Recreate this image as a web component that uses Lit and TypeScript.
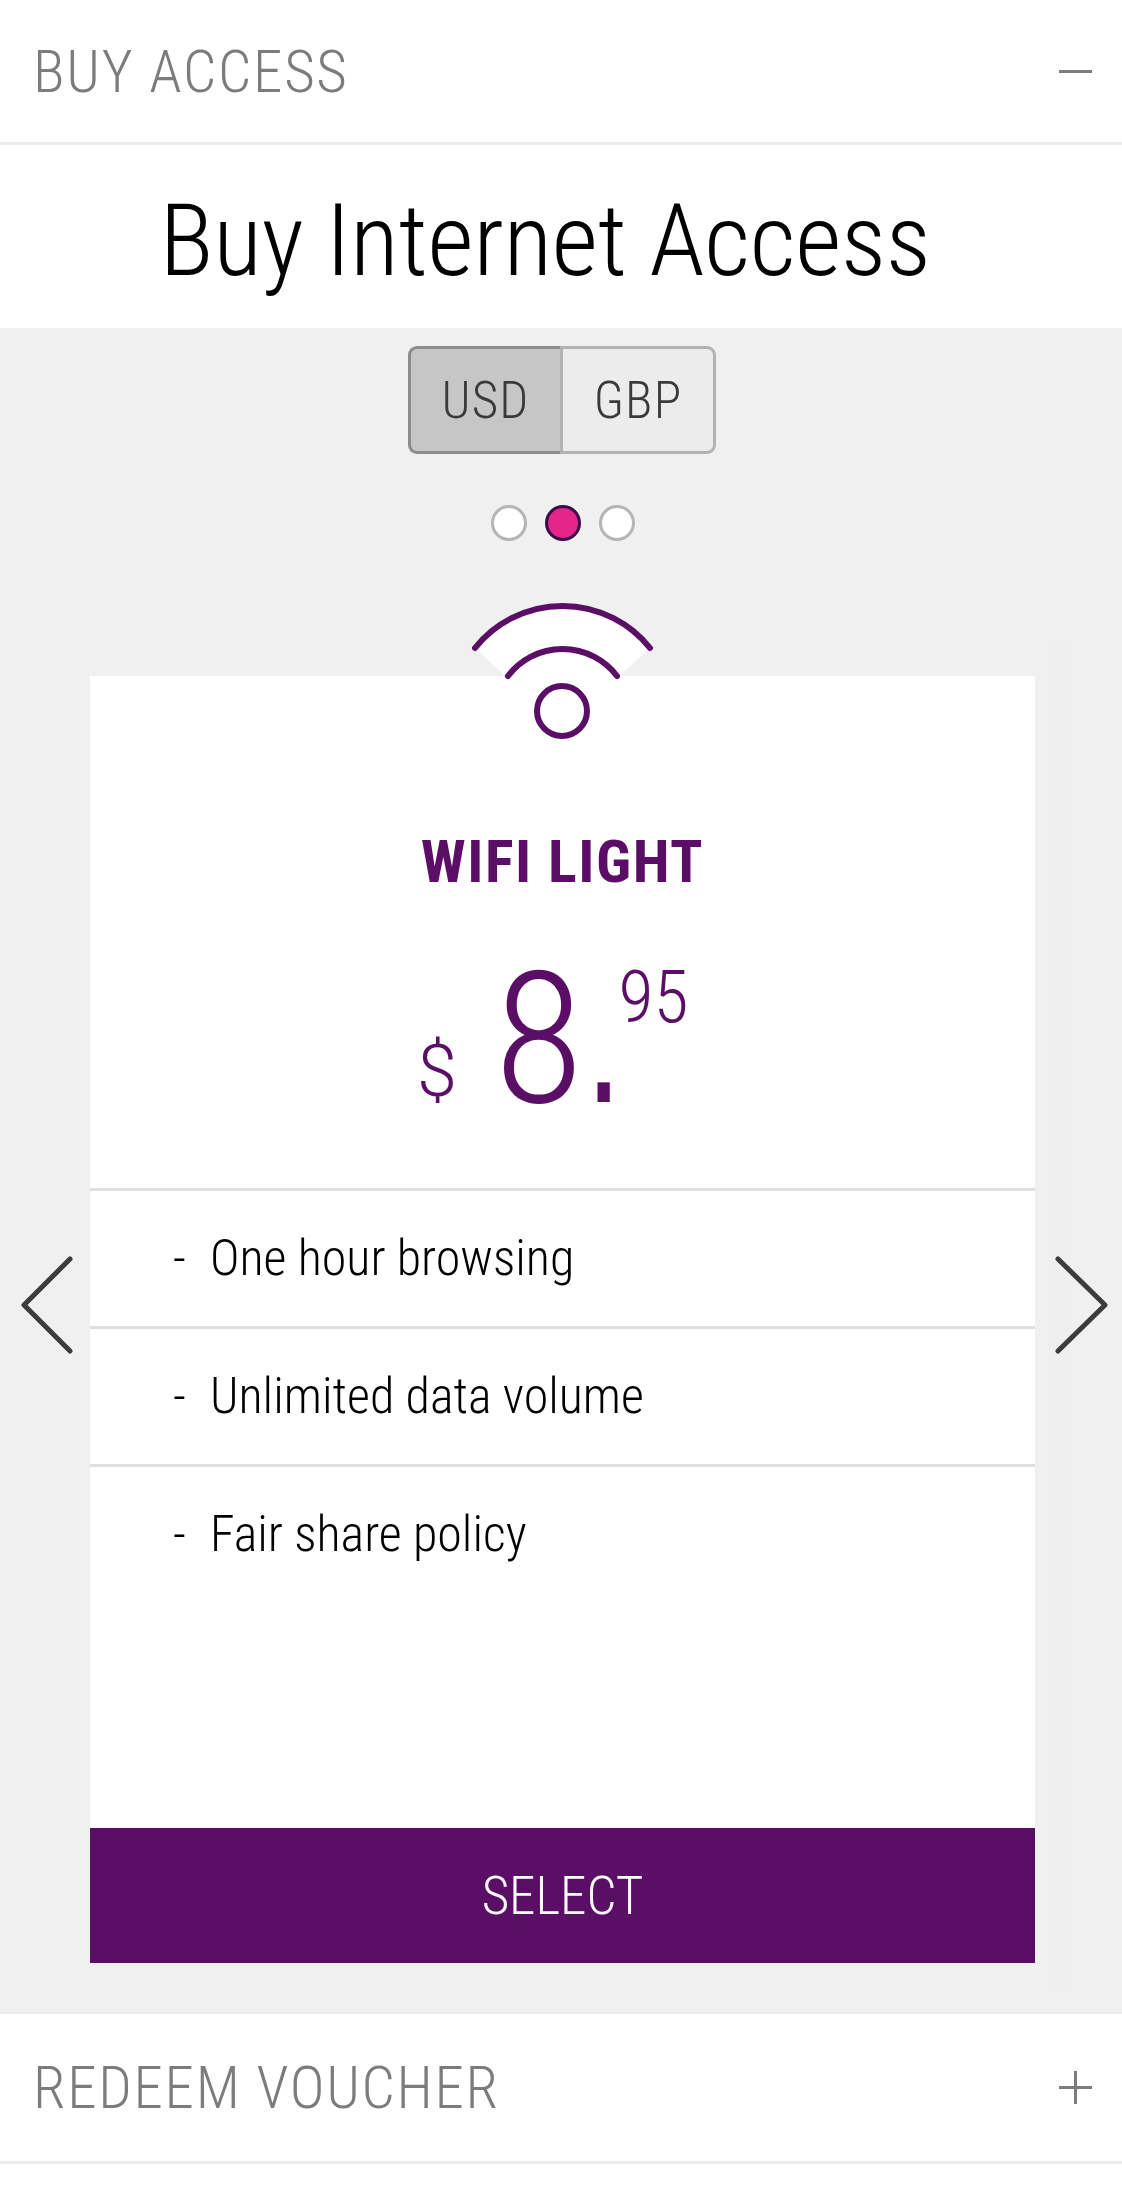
import { LitElement, css, html } from "lit";
import { customElement } from "lit/decorators.js";

const features = ["One hour browsing", "Unlimited data volume", "Fair share policy"];

@customElement("app-root")
export class AppRoot extends LitElement {
  render() {
    return html`
      <div class="acc">
        <span class="acc-title">BUY ACCESS</span>
        <svg class="acc-icon" viewBox="0 0 33 33"><path d="M0 16.5H33" /></svg>
      </div>
      <h1>Buy Internet Access</h1>
      <section class="panel">
        <div class="seg">
          <div class="seg-btn on">USD</div>
          <div class="seg-btn">GBP</div>
        </div>
        <div class="dots">
          <span class="dot"></span>
          <span class="dot on"></span>
          <span class="dot"></span>
        </div>
        <div class="ghost"></div>
        <svg class="arrow left" viewBox="0 0 54 98">
          <path d="M50 3L4 49L50 95" />
        </svg>
        <svg class="arrow right" viewBox="0 0 54 98">
          <path d="M3 3L50 49L3 95" />
        </svg>
        <div class="card">
          <svg class="wifi" viewBox="0 0 200 150">
            <path class="fan" d="M100 127L13 47A112 112 0 0 1 188 47Z" />
            <path class="wave" d="M13 47A112 112 0 0 1 188 47" />
            <path class="wave" d="M46 75A68.5 68.5 0 0 1 155 75" />
            <circle class="wave" cx="100" cy="110" r="25" />
          </svg>
          <div class="head">
            <div class="name">WIFI LIGHT</div>
            <div class="price">
              <span class="cur">$</span><span class="whole">8</span><span class="point">.</span><span class="cents">95</span>
            </div>
          </div>
          ${features.map(
            (f) => html`<div class="row"><span class="dash">-</span><span>${f}</span></div>`
          )}
          <button class="select">SELECT</button>
        </div>
      </section>
      <div class="acc second">
        <span class="acc-title">REDEEM VOUCHER</span>
        <svg class="acc-icon" viewBox="0 0 33 33"><path d="M0 16.5H33M16.5 0V33" /></svg>
      </div>
    `;
  }

  static styles = css`
    :host {
      display: block;
      background: #fff;
      min-height: 2188px;
      font-family: Roboto, "Liberation Sans", sans-serif;
      font-weight: 300;
      font-stretch: 75%;
    }
    .acc {
      display: flex;
      justify-content: space-between;
      align-items: center;
      height: 145px;
      padding: 0 30px 0 33px;
      border-bottom: 3px solid #ececec;
      box-sizing: border-box;
    }
    .acc.second {
      height: 153px;
      border-top: 3px solid #ececec;
    }
    .acc-title {
      font-size: 59px;
      letter-spacing: 1.7px;
      color: #7c7c7c;
    }
    .acc-icon {
      width: 33px;
      height: 33px;
      fill: none;
      stroke: #7c7c7c;
      stroke-width: 3;
    }
    h1 {
      margin: 0;
      height: 183px;
      padding: 8px 32px 0 0;
      box-sizing: border-box;
      display: flex;
      align-items: center;
      justify-content: center;
      font-size: 101px;
      font-weight: 300;
      letter-spacing: -0.35px;
      color: #000;
    }
    .panel {
      position: relative;
      height: 1683px;
      padding: 18px 0 48px 2px;
      box-sizing: border-box;
      background: #f0f0f0;
    }
    .seg {
      display: flex;
      width: 308px;
      height: 108px;
      margin: 0 auto;
      box-sizing: border-box;
      color: #3a3a3a;
      font-size: 51px;
      letter-spacing: 1.2px;
    }
    .seg-btn {
      flex: 1;
      display: flex;
      align-items: center;
      justify-content: center;
      border: 3px solid #b2b2b2;
      background: #ececec;
      border-radius: 0 9px 9px 0;
    }
    .seg-btn.on {
      flex: 0 0 152px;
      box-sizing: border-box;
      background: #c6c6c6;
      border-color: #8c8c8c;
      border-right: none;
      border-radius: 9px 0 0 9px;
    }
    .dots {
      display: flex;
      justify-content: center;
      gap: 18px;
      margin: 51px 0 0 2px;
    }
    .dot {
      width: 36px;
      height: 36px;
      box-sizing: border-box;
      border-radius: 50%;
      border: 3px solid #b5b5b5;
      background: #fff;
    }
    .dot.on {
      background: #e6258a;
      border-color: #3d0a4d;
    }
    .ghost {
      position: absolute;
      left: 1048px;
      top: 300px;
      width: 23px;
      height: 1364px;
      background: linear-gradient(#f0f0f0, #efefef 80px);
    }
    .arrow {
      position: absolute;
      top: 928px;
      width: 54px;
      height: 98px;
      fill: none;
      stroke: #3c3c3c;
      stroke-width: 5;
      stroke-linecap: round;
      stroke-linejoin: round;
    }
    .arrow.left {
      left: 20px;
    }
    .arrow.right {
      left: 1055px;
    }
    .card {
      position: relative;
      display: flex;
      flex-direction: column;
      width: 945px;
      height: 1287px;
      margin: 135px 0 0 88px;
      background: #fff;
    }
    .wifi {
      position: absolute;
      left: 372px;
      top: -75px;
      width: 200px;
      height: 150px;
      fill: none;
      filter: blur(0.7px);
    }
    .fan {
      fill: #fff;
    }
    .wave {
      stroke: #5b0e66;
      stroke-width: 6;
      stroke-linecap: round;
    }
    .head {
      height: 512px;
      color: #5b0e66;
    }
    .name {
      margin-top: 151px;
      font-size: 60px;
      letter-spacing: 1.5px;
      line-height: 70px;
      font-weight: 700;
      text-align: center;
    }
    .price {
      margin-top: -9px;
      padding-left: 327px;
      white-space: nowrap;
      line-height: 220px;
    }
    .cur {
      font-size: 72px;
      font-stretch: 90%;
      vertical-align: 6px;
      margin-right: 37px;
    }
    .whole {
      font-size: 184px;
    }
    .point {
      display: inline-block;
      font-family: "Liberation Sans", sans-serif;
      font-size: 184px;
      font-weight: 400;
      transform: scaleX(0.7);
      margin-left: -5px;
    }
    .cents {
      font-size: 72px;
      vertical-align: 80px;
      margin-left: -11px;
    }
    .row {
      display: flex;
      flex: 0 0 138px;
      box-sizing: border-box;
      padding: 37px 0 0 83px;
      border-top: 3px solid #e0e0e0;
      font-size: 50px;
      line-height: 60px;
      color: #000;
    }
    .row:last-of-type {
      flex: 1;
    }
    .dash {
      width: 37px;
    }
    .select {
      height: 135px;
      border: none;
      padding: 0;
      background: #5b0e66;
      color: #fff;
      font: inherit;
      font-size: 53px;
    }
  `;
}
